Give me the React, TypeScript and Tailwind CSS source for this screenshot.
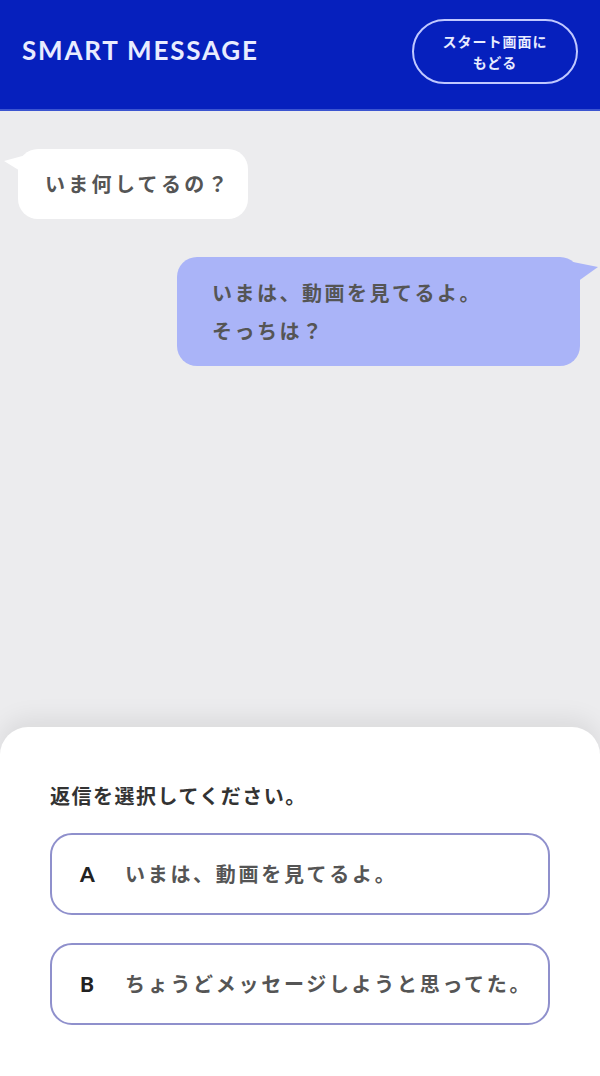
import React from "react";

const jp = { fontFamily: '"Noto Sans CJK JP", "Noto Sans", sans-serif' };
const lat = { fontFamily: '"Lato", "Noto Sans", sans-serif' };

export default function App() {
  return (
    <div className="w-[600px] h-[1076px] bg-[#ececee] flex flex-col overflow-hidden" style={jp}>
      <header className="h-[111px] shrink-0 bg-[#0620bd] border-b-2 border-[#3c55d0] flex items-center justify-between pl-[22px] pr-[22px]">
        <div className="text-[#e8ecff] text-[26px] font-bold tracking-[1.8px] mt-[-8px]" style={lat}>
          SMART MESSAGE
        </div>
        <button className="w-[166px] h-[65px] rounded-full border-2 border-[#c0c8ff] text-[#e8ecff] text-[14px] font-bold leading-[21px] tracking-[1px] flex items-center justify-center text-center mt-[-6px]">
          スタート画面に<br />もどる
        </button>
      </header>

      <div className="flex-1 flex flex-col px-[18px] pt-[38px] gap-[38px]">
        <div className="relative self-start">
          <svg className="absolute left-[-14px] top-[4px]" width="30" height="28" viewBox="0 0 30 28">
            <path d="M0 8 L22 2 L26 24 Z" fill="#ffffff" />
          </svg>
          <div className="relative bg-white rounded-[20px] h-[70px] w-[230px] flex items-center pl-[27px] text-[20px] tracking-[3.3px] font-bold text-[#555]">
            いま何してるの？
          </div>
        </div>

        <div className="relative self-end mr-[2px]">
          <svg className="absolute right-[-18px] top-[0px]" width="34" height="34" viewBox="0 0 34 34">
            <path d="M34 10 L4 4 L6 30 Z" fill="#aab4f8" />
          </svg>
          <div className="relative bg-[#aab4f8] rounded-[20px] h-[109px] w-[403px] flex flex-col justify-center pl-[35px] text-[20px] tracking-[2.5px] font-bold text-[#555] leading-[38px]">
            <div>いまは、動画を見てるよ。</div>
            <div>そっちは？</div>
          </div>
        </div>
      </div>

      <div className="h-[349px] shrink-0 bg-white rounded-t-[28px] shadow-[0_-8px_24px_rgba(0,0,0,0.08)] px-[50px] pt-[54px] flex flex-col">
        <div className="text-[20px] tracking-[1.5px] font-bold text-[#333] leading-[30px]">返信を選択してください。</div>
        <div className="mt-[22px] flex flex-col gap-[28px]">
          {[
            ["A", "いまは、動画を見てるよ。"],
            ["B", "ちょうどメッセージしようと思ってた。"],
          ].map(([k, t]) => (
            <div key={k} className="h-[82px] rounded-[22px] border-2 border-[#8f90cc] flex items-center pl-[28px]">
              <span className="w-[45px] text-[21px] font-black text-[#222]" style={lat}>{k}</span>
              <span className="text-[20px] tracking-[2.7px] font-bold text-[#555]">{t}</span>
            </div>
          ))}
        </div>
      </div>
    </div>
  );
}
